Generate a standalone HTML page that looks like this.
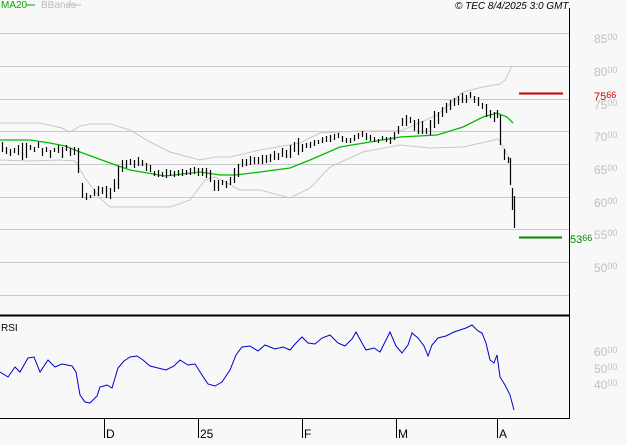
<!DOCTYPE html><html><head><style>
body{margin:0;background:#f8f8f8;width:627px;height:440px;overflow:hidden;font-family:"Liberation Sans",sans-serif}
svg text{font-family:"Liberation Sans",sans-serif}
</style></head><body>
<svg width="627" height="440" xmlns="http://www.w3.org/2000/svg">
<rect width="627" height="440" fill="#f8f8f8"/>
<g stroke="#c8c8c8" stroke-width="1">
<line x1="0" y1="33.5" x2="569" y2="33.5"/><line x1="0" y1="66.5" x2="569" y2="66.5"/>
<line x1="0" y1="99.5" x2="569" y2="99.5"/><line x1="0" y1="131.5" x2="569" y2="131.5"/>
<line x1="0" y1="164.5" x2="569" y2="164.5"/><line x1="0" y1="197.5" x2="569" y2="197.5"/>
<line x1="0" y1="229.5" x2="569" y2="229.5"/><line x1="0" y1="262.5" x2="569" y2="262.5"/>
<line x1="0" y1="295.5" x2="569" y2="295.5"/>
</g>
<line x1="569.5" y1="8" x2="569.5" y2="419" stroke="#000"/>
<line x1="0" y1="315.5" x2="570" y2="315.5" stroke="#000" stroke-width="2"/>
<line x1="0" y1="418.5" x2="570" y2="418.5" stroke="#000"/>
<g stroke="#000"><line x1="104.5" y1="418" x2="104.5" y2="438"/><line x1="198.5" y1="418" x2="198.5" y2="438"/><line x1="302.5" y1="418" x2="302.5" y2="438"/><line x1="396.5" y1="418" x2="396.5" y2="438"/><line x1="497.5" y1="418" x2="497.5" y2="438"/></g>
<g font-size="12" fill="#000"><text x="106" y="438">D</text><text x="200" y="438">25</text><text x="304" y="438">F</text><text x="398" y="438">M</text><text x="499" y="438">A</text></g>
<g fill="none" stroke="#c8c8c8">
<polyline points="0,123 40,123 62,128 70,132 80,126 90,124 110,124 130,130 150,142 170,152 200,160 215,157 230,157 260,150 300,143 320,133 360,131 400,131 410,127 437,115 463,92 483,87 500,84 505,80 512,66"/>
<polyline points="0,160 30,161 60,160 75,161 85,178 100,198 110,207 170,207 190,200 205,180 215,177 225,182 240,190 260,190 290,198 310,188 330,167 363,152 400,145 430,148 463,147 490,141 498,139 504,148 510,160"/>
</g>
<polyline fill="none" stroke="#00bb00" stroke-width="1.3" points="0,140 30,140 50,143 65,146 80,152 110,163 130,170 165,176 200,172 220,175 235,175 260,172 290,168 310,160 340,147 370,142 400,137 437,135 463,127 483,117 497,113 507,117 513,123"/>
<path fill="none" stroke="#000" stroke-width="1.2" d="M2.5 142V152M6.5 147V154M10.5 149V156M14.5 148V153M18.5 145V155M22.5 143V160M26.5 143V158M30.5 145V150M34.5 147V152M38.5 142V148M42.5 148V156M46.5 147V152M50.5 150V158M54.5 148V152M58.5 145V153M62.5 147V158M66.5 145V151M70.5 148V156M74.5 147V155M78.5 148V173M82.5 183V198M86.5 193V200M90.5 195V198M94.5 189V196M98.5 186V196M102.5 187V194M106.5 186V198M110.5 188V199M114.5 179V192M118.5 166V189M122.5 160V172M126.5 160V168M130.5 159V165M134.5 160V168M138.5 157V166M142.5 160V166M146.5 163V171M150.5 165V172M154.5 171V176M158.5 170V177M162.5 172V177M166.5 169V178M170.5 170V176M174.5 171V177M178.5 170V176M182.5 169V176M186.5 170V175M190.5 168V175M194.5 167V174M198.5 168V176M202.5 168V176M206.5 168V178M210.5 170V182M214.5 180V191M218.5 180V191M222.5 180V185M226.5 181V188M230.5 177V185M234.5 168V183M238.5 164V177M242.5 159V167M246.5 159V166M250.5 156V165M254.5 157V164M258.5 157V164M262.5 155V164M266.5 155V163M270.5 154V162M274.5 151V160M278.5 153V160M282.5 148V157M286.5 150V158M290.5 145V158M294.5 142V152M298.5 138V155M302.5 144V152M306.5 143V148M310.5 142V148M314.5 140V146M318.5 140V144M322.5 137V143M326.5 136V142M330.5 135V142M334.5 134V140M338.5 133V138M342.5 136V142M346.5 138V143M350.5 138V143M354.5 135V141M358.5 133V139M362.5 131V137M366.5 133V140M370.5 135V141M374.5 137V142M378.5 139V143M382.5 136V140M386.5 137V142M390.5 137V144M394.5 132V140M398.5 126V134M402.5 118V126M406.5 115V126M410.5 117V123M414.5 120V131M418.5 119V134M422.5 121V134M426.5 128V134M430.5 120V135M434.5 111V128M438.5 112V124M442.5 107V117M446.5 103V113M450.5 100V110M454.5 98V106M458.5 96V105M462.5 93V103M466.5 95V103M470.5 92V98M474.5 96V103M478.5 97V106M482.5 103V109M486.5 104V117M490.5 110V118M494.5 112V122M497.5 110V118M500.5 115V145M504.5 149V160M508.5 157V163M510.5 158V185M512.5 188V210M514.5 196V228"/>
<line x1="519" y1="93.5" x2="563" y2="93.5" stroke="#cc0000" stroke-width="2"/>
<line x1="519" y1="237.5" x2="562" y2="237.5" stroke="#008800" stroke-width="2"/>
<polyline fill="none" stroke="#0000cc" points="0,372 8,377 15,367 20,372 28,358 34,357 40,372 48,360 55,367 62,364 72,366 76,372 80,395 85,402 90,403 97,396 100,387 107,385 112,388 118,368 124,361 130,357 137,356 143,360 150,366 158,368 166,370 174,366 180,360 188,365 195,364 202,375 208,384 215,386 222,382 230,370 236,355 242,347 250,346 258,351 265,345 275,349 283,347 290,350 296,343 302,337 308,343 315,344 322,338 330,335 338,343 345,346 352,339 356,332 362,343 366,350 374,348 380,352 386,340 390,332 396,346 402,353 408,345 412,333 418,338 424,346 428,356 432,345 438,338 446,336 454,332 460,330 466,328 472,325 478,331 482,333 486,343 490,360 494,363 497,355 500,377 505,385 510,395 514,410"/>
<text x="1" y="8" font-size="10" fill="#00aa00">MA20</text>
<line x1="26" y1="5" x2="35" y2="5" stroke="#00aa00"/>
<text x="41" y="8" font-size="10" fill="#bbbbbb">BBands</text>
<line x1="67" y1="5" x2="81" y2="5" stroke="#bbbbbb"/>
<text x="455" y="9" font-size="10" font-style="italic" fill="#000">© TEC 8/4/2025 3:0 GMT</text>
<text x="1" y="331" font-size="10" fill="#000">RSI</text>
<g fill="#c0c0c0" font-size="12">
<text x="594" y="43">85<tspan font-size="9" dy="-3">00</tspan></text>
<text x="594" y="76">80<tspan font-size="9" dy="-3">00</tspan></text>
<text x="594" y="109">75<tspan font-size="9" dy="-3">00</tspan></text>
<text x="594" y="141">70<tspan font-size="9" dy="-3">00</tspan></text>
<text x="594" y="174">65<tspan font-size="9" dy="-3">00</tspan></text>
<text x="594" y="207">60<tspan font-size="9" dy="-3">00</tspan></text>
<text x="594" y="239">55<tspan font-size="9" dy="-3">00</tspan></text>
<text x="594" y="272">50<tspan font-size="9" dy="-3">00</tspan></text>
<text x="594" y="356">60<tspan font-size="9" dy="-3">00</tspan></text>
<text x="594" y="373">50<tspan font-size="9" dy="-3">00</tspan></text>
<text x="594" y="389">40<tspan font-size="9" dy="-3">00</tspan></text>
</g>
<text x="594" y="100" font-size="11" fill="#cc0000">75<tspan font-size="9" dy="-2">66</tspan></text>
<text x="570" y="243" font-size="11" fill="#008800">53<tspan font-size="9" dy="-2">66</tspan></text>
</svg>
</body></html>
